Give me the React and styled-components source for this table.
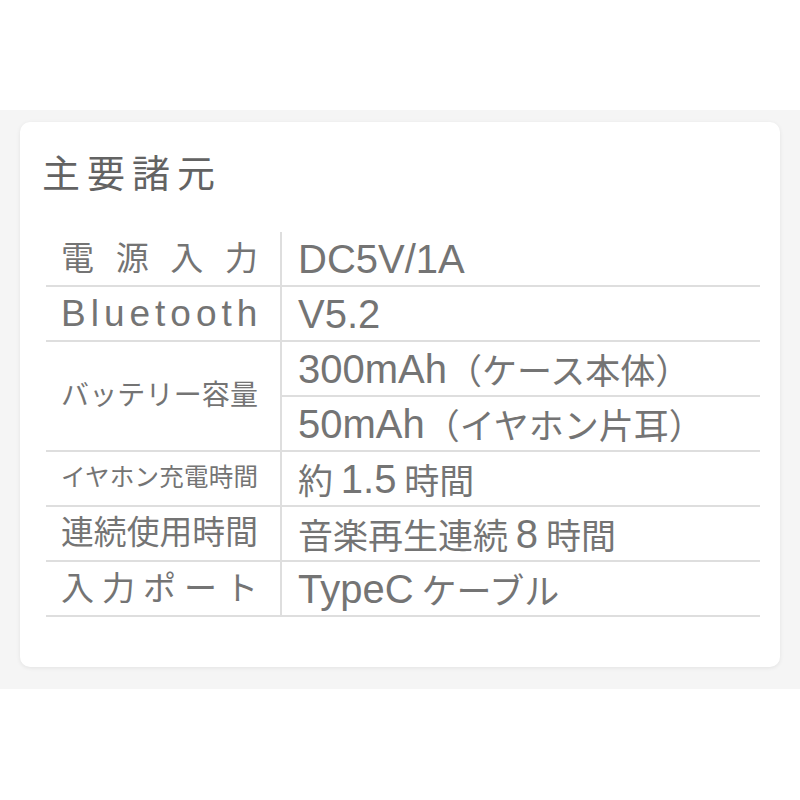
import React from "react";
import styled, { createGlobalStyle } from "styled-components";

const Global = createGlobalStyle`
  html, body { margin: 0; padding: 0; background: #ffffff; }
  body { font-family: "Liberation Sans", "Noto Sans CJK JP", sans-serif; }
`;

const Page = styled.div`
  padding-top: 110px;
  width: 800px;
  height: 800px;
  box-sizing: border-box;
`;

const Band = styled.section`
  background: #f5f5f5;
  padding: 12px 20px 22px;
`;

const Card = styled.div`
  background: #ffffff;
  border-radius: 10px;
  box-shadow: 0 1px 4px rgba(0, 0, 0, 0.08);
  padding: 30px 20px 50px 22px;
`;

const Title = styled.h2`
  margin: 0;
  font-family: "Noto Sans CJK JP", sans-serif;
  font-weight: 400;
  font-size: 38px;
  line-height: 1;
  letter-spacing: 7px;
  color: #636363;
`;

const Table = styled.div`
  display: grid;
  grid-template-columns: 236px 1fr;
  grid-auto-rows: 55px;
  margin: 42px 0 0 4px;
  color: #747474;
`;

const LabelCell = styled.div`
  grid-row: span ${(p) => p.$span};
  display: flex;
  align-items: center;
  box-sizing: border-box;
  padding: 0 22px 0 15px;
  border-right: 2px solid #dedede;
  border-bottom: 2px solid #dedede;
`;

const LabelText = styled.span`
  display: block;
  width: 100%;
  font-family: "Liberation Sans", "Noto Sans CJK JP", sans-serif;
  font-size: ${(p) => p.$size}px;
  line-height: 1;
  letter-spacing: ${(p) => p.$tracking || 0}px;
  text-align: ${(p) => (p.$justify ? "justify" : "left")};
  text-align-last: ${(p) => (p.$justify ? "justify" : "left")};
  white-space: nowrap;
`;

const ValueCell = styled.div`
  display: flex;
  align-items: center;
  box-sizing: border-box;
  padding-left: 16px;
  border-bottom: 2px solid #dedede;
  font-family: "Liberation Sans", "Noto Sans CJK JP", sans-serif;
  font-size: 40px;
  line-height: 1;
  white-space: pre;
`;

const Jp = styled.span`
  font-family: "Noto Sans CJK JP", sans-serif;
  font-size: 35px;
`;

const specs = [
  { label: "電源入力", size: 33, justify: true, values: ["DC5V/1A"] },
  { label: "Bluetooth", size: 37, tracking: 5, values: ["V5.2"] },
  {
    label: "バッテリー容量",
    size: 28,
    justify: true,
    values: ["300mAh（ケース本体）", "50mAh（イヤホン片耳）"],
  },
  { label: "イヤホン充電時間", size: 24.5, justify: true, values: ["約 1.5 時間"] },
  { label: "連続使用時間", size: 32.8, justify: true, values: ["音楽再生連続 8 時間"] },
  { label: "入力ポート", size: 33, justify: true, values: ["TypeC ケーブル"] },
];

const cjkRun = /(\s*[\u3000-\u30ff\u3400-\u9fff\uff00-\uffef]+\s*)/;

function renderValue(text) {
  return text
    .split(cjkRun)
    .filter(Boolean)
    .map((part, i) =>
      cjkRun.test(part) ? <Jp key={i}>{part}</Jp> : <React.Fragment key={i}>{part}</React.Fragment>
    );
}

export default function App() {
  return (
    <Page>
      <Global />
      <Band>
        <Card>
          <Title>主要諸元</Title>
          <Table>
            {specs.map((s) => (
              <React.Fragment key={s.label}>
                <LabelCell $span={s.values.length}>
                  <LabelText $size={s.size} $justify={s.justify} $tracking={s.tracking}>
                    {s.label}
                  </LabelText>
                </LabelCell>
                {s.values.map((v) => (
                  <ValueCell key={v}>{renderValue(v)}</ValueCell>
                ))}
              </React.Fragment>
            ))}
          </Table>
        </Card>
      </Band>
    </Page>
  );
}
